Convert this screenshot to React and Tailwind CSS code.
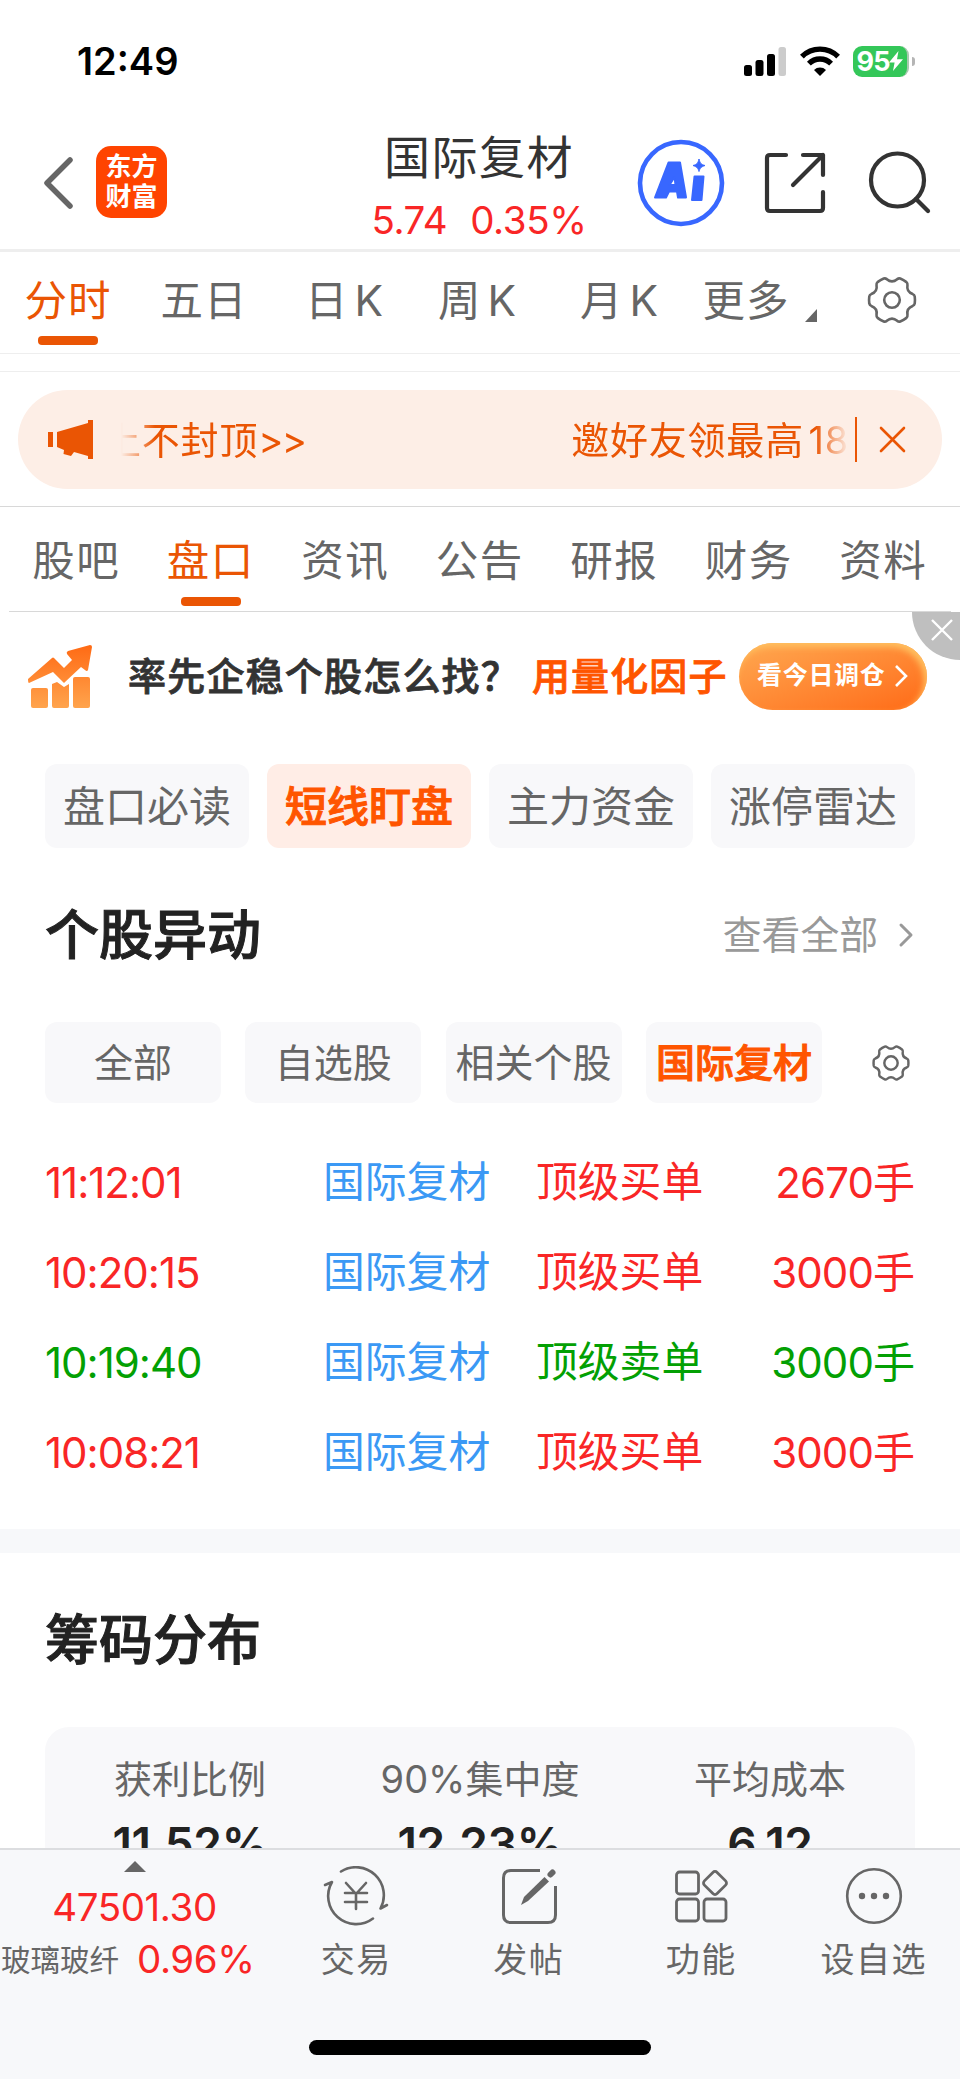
import { ChevronRight } from 'lucide-react';

const chartTabs = [
  { label: '分时', cell: 'w-[136px]', active: true },
  { label: '五日', cell: 'w-[136px]' },
  { label: '日 K', cell: 'w-[145px]' },
  { label: '周 K', cell: 'w-[121px]' },
  { label: '月 K', cell: 'w-[163px]' },
  { label: '更多', cell: 'w-[90px]' },
];

const infoTabs = ['股吧', '盘口', '资讯', '公告', '研报', '财务', '资料'];
const topics = ['盘口必读', '短线盯盘', '主力资金', '涨停雷达'];
const filters = ['全部', '自选股', '相关个股', '国际复材'];

const orders = [
  { time: '11:12:01', name: '国际复材', type: '顶级买单', amount: '2670', side: 'buy' },
  { time: '10:20:15', name: '国际复材', type: '顶级买单', amount: '3000', side: 'buy' },
  { time: '10:19:40', name: '国际复材', type: '顶级卖单', amount: '3000', side: 'sell' },
  { time: '10:08:21', name: '国际复材', type: '顶级买单', amount: '3000', side: 'buy' },
];

const chips = [
  { label: '获利比例', value: '11.52%' },
  { label: '90%集中度', value: '12.23%' },
  { label: '平均成本', value: '6.12' },
];

const polar = (r, deg) => {
  const a = (deg * Math.PI) / 180;
  return `${(r * Math.cos(a)).toFixed(2)} ${(r * Math.sin(a)).toFixed(2)}`;
};

// six wide teeth joined by round notches
const gearPath = () => {
  let d = `M${polar(21.5, -16)}`;
  for (let i = 0; i < 6; i++) {
    const a = i * 60;
    d += `Q${polar(23, a - 13)} ${polar(23, a - 9)}`;
    d += `Q${polar(23.2, a)} ${polar(23, a + 9)}`;
    d += `Q${polar(23, a + 13)} ${polar(21.5, a + 16)}`;
    d += `Q${polar(16.5, a + 30)} ${polar(21.5, a + 44)}`;
  }
  return `${d}Z`;
};

function Gear({ className, hole, stroke }) {
  return (
    <svg className={className} viewBox="-25 -25 50 50" fill="none" stroke="#666" strokeWidth={stroke}>
      <path d={gearPath()} strokeLinejoin="round" />
      <circle r={hole} />
    </svg>
  );
}

function StatusBar() {
  return (
    <div className="h-[122px] pl-[77px] pr-[45px] flex items-center justify-between">
      <span className="text-[38px] font-semibold leading-none text-black">12:49</span>
      <div className="flex items-center">
        <svg className="w-[42px] h-[30px]" viewBox="0 0 42 30">
          <rect x="0" y="19" width="8" height="11" rx="2.5" />
          <rect x="11.5" y="14" width="8" height="16" rx="2.5" />
          <rect x="23" y="8" width="8" height="22" rx="2.5" />
          <rect x="34.5" y="1" width="7.5" height="29" rx="2.5" fill="#ccc" />
        </svg>
        <svg className="w-[40px] h-[30px] ml-[14px]" viewBox="0 0 40 30" fill="none" stroke="#000" strokeWidth="5.4">
          <path d="M1.9 10.6a25.6 25.6 0 0 1 36.2 0" />
          <path d="M8.9 17.6a15.7 15.7 0 0 1 22.2 0" />
          <path d="M20 30l-6-6a8.5 8.5 0 0 1 12 0z" fill="#000" stroke="none" />
        </svg>
        <div className="ml-[13px] h-[31px] w-[56px] rounded-[9px] bg-[#34c759] border-r-2 border-[#a9c8b0] flex items-center justify-center">
          <span className="text-[27px] leading-none font-bold text-white tracking-[-1px]">95</span>
          <svg className="w-[14px] h-[20px]" viewBox="0 0 14 20" fill="#fff">
            <path d="M9.5 0L0 11.5h5.6L4 20 14 8.2H8z" />
          </svg>
        </div>
        <div className="ml-[3px] w-[3px] h-[9px] rounded-r-full bg-[#b5b5b5]" />
      </div>
    </div>
  );
}

function Header() {
  return (
    <div className="h-[127px] pl-[43px] flex">
      <svg className="w-[32px] h-[54px] mt-[34px]" viewBox="0 0 32 54" fill="none" stroke="#666" strokeWidth="5.5" strokeLinecap="round" strokeLinejoin="round">
        <path d="M27 4L4 27l23 23" />
      </svg>
      <div className="ml-[21px] mt-[24px] w-[71px] h-[72px] rounded-[15px] bg-[#ff4400] text-white text-[26px] font-bold leading-[30px] pt-[6px] text-center">
        <div>东方</div>
        <div>财富</div>
      </div>
      <div className="ml-[186px] w-[252px] text-center">
        <div className="mt-[7px] h-[56px] leading-[56px] text-[46px] tracking-[1.5px] text-[#333]">国际复材</div>
        <div className="mt-[12px] h-[46px] leading-[46px] text-[38.5px] tracking-[-0.4px] text-[#f92626] flex justify-center gap-[23px]">
          <span>5.74</span>
          <span>0.35%</span>
        </div>
      </div>
      <svg className="ml-[32px] mt-[17px] w-[88px] h-[88px]" viewBox="0 0 88 88">
        <circle cx="44" cy="44" r="41" fill="none" stroke="#3867ff" strokeWidth="4.6" />
        <g fill="#3867ff" stroke="#3867ff" strokeWidth="2" strokeLinejoin="round">
          <path fillRule="evenodd" d="M31.500 23.500H43L49 58.500H41l-1-6h-8l-3 6H18zM32.500 46h6l-1-8z" />
          <path d="M57.500 37.500h9l-2 23.500h-9.500z" />
          <path d="M62 20c1 4 2 5.500 6 6.500-4 1.500-5 2.500-6 6-1-3.500-2-4.500-6-6 4-1 5-2.500 6-6.500z" strokeWidth="1" />
        </g>
      </svg>
      <svg className="ml-[39px] mt-[30px] w-[62px] h-[62px]" viewBox="0 0 62 62" fill="none" stroke="#333" strokeWidth="4.2" strokeLinecap="round" strokeLinejoin="round">
        <path d="M22 3H6Q3 3 3 6V56Q3 59 6 59H56Q59 59 59 56V40" />
        <path d="M39 3H59V23M59 3L29 33" />
      </svg>
      <svg className="ml-[42px] mt-[28px] w-[64px] h-[64px]" viewBox="0 0 64 64" fill="none" stroke="#333" strokeWidth="4.2" strokeLinecap="round">
        <circle cx="29.500" cy="30" r="26.500" />
        <path d="M48 49l12 12" />
      </svg>
    </div>
  );
}

function ChartTabs() {
  return (
    <div className="h-[105px] border-t-[3px] border-b border-[#eee] flex">
      {chartTabs.map((tab) => (
        <div key={tab.label} className={`${tab.cell} flex flex-col items-center`}>
          <span className={`mt-[19px] h-[60px] leading-[60px] text-[42.5px] tracking-[1px] [word-spacing:-7px] whitespace-nowrap ${tab.active ? 'text-[#ea5504]' : 'text-[#666]'}`}>
            {tab.label}
          </span>
          {tab.active && <div className="mt-[5px] w-[60px] h-[9px] rounded-[4px] bg-[#ea5504]" />}
        </div>
      ))}
      <svg className="ml-[14px] mt-[57px] w-[12px] h-[13px]" viewBox="0 0 12 13" fill="#666">
        <path d="M12 0V13H0z" />
      </svg>
      <Gear className="ml-[50px] mt-[23px] w-[50px] h-[50px]" hole={7.8} stroke={2.6} />
    </div>
  );
}

function Notice() {
  return (
    <div className="mt-[17px] border-t border-[#eee] h-[135px] px-[18px] pt-[18px]">
      <div className="h-[99px] rounded-[50px] bg-[#fdeee6] flex items-center text-[#ea5504]">
        <svg className="ml-[30px] w-[45px] h-[39px]" viewBox="0 0 45 39" fill="#ea5504">
          <path d="M0 12h5v15H0zM9 12L40 3V0h5v39h-5v-3l-14-4-3 4-7.500-2 .5-4-7-3z" />
        </svg>
        <div className="ml-[28px] w-[728px] h-[56px] leading-[56px] text-[38px] overflow-hidden flex whitespace-nowrap [mask-image:linear-gradient(to_right,transparent,black_34px,black_694px,transparent)]">
          <span className="ml-[-18px] tracking-[0.8px]">
            上不封顶<span className="tracking-[-1.5px]">&gt;&gt;</span>
          </span>
          <span className="ml-auto tracking-[0.8px] [word-spacing:-7px]">邀好友领最高 18</span>
        </div>
        <div className="ml-[6px] w-[2px] h-[45px] bg-[#ea5504]" />
        <svg className="ml-[22px] w-[27px] h-[27px]" viewBox="0 0 27 27" stroke="#ea5504" strokeWidth="2.600" strokeLinecap="round">
          <path d="M2 2l23 23M25 2L2 25" />
        </svg>
      </div>
    </div>
  );
}

function InfoTabs() {
  return (
    <div className="border-t border-[#d8d8d8] px-[9px]">
      <div className="h-[105px] border-b border-[#d8d8d8] flex">
        {infoTabs.map((label, i) => (
          <div key={label} className="w-[134.500px] flex flex-col items-center">
            <span className={`mt-[24px] h-[60px] leading-[60px] text-[42.500px] tracking-[1.500px] whitespace-nowrap ${i === 1 ? 'text-[#ea5504]' : 'text-[#666]'}`}>
              {label}
            </span>
            {i === 1 && <div className="mt-[6px] w-[60px] h-[9px] rounded-[4px] bg-[#ea5504]" />}
          </div>
        ))}
      </div>
    </div>
  );
}

function AdBanner() {
  return (
    <div className="relative h-[128px] pl-[28px] pr-[33px] flex items-center">
      <svg className="w-[65px] h-[63px]" viewBox="0 0 65 63">
        <defs>
          <linearGradient id="ad" x1="0" y1="0" x2="0" y2="63" gradientUnits="userSpaceOnUse">
            <stop offset="0" stopColor="#ff6a14" />
            <stop offset="1" stopColor="#ffa44d" />
          </linearGradient>
        </defs>
        <g fill="url(#ad)">
          <path d="M0 34L24 13Q25 12 26 13L36 23L44 15L39 9Q38 7 40 6L62 0Q64 0 64 2L60 25Q59 27 57 25L53 22L36 38L25 27L1 38Q0 38 0 34z" />
          <rect x="3" y="43" width="17" height="20" rx="2" />
          <path d="M24 39l5-2 7 5 5-3v22q0 2-2 2H26q-2 0-2-2z" />
          <rect x="45" y="32" width="17" height="31" rx="2" />
        </g>
      </svg>
      <span className="ml-[35px] w-[404px] text-[38px] tracking-[1.200px] font-medium [-webkit-text-stroke:0.8px] whitespace-nowrap text-[#333]">率先企稳个股怎么找？</span>
      <span className="text-[38px] tracking-[1.100px] font-medium [-webkit-text-stroke:0.8px] whitespace-nowrap text-[#ff5500]">用量化因子</span>
      <div className="ml-auto w-[188px] h-[67px] rounded-full bg-linear-to-br from-[#ffa850] via-[#ff8a35] to-[#ff6a14] shadow-[inset_-3px_4px_6px_#ffc060] flex items-center pl-[18px] text-white">
        <span className="text-[25px] tracking-[0.700px] font-bold whitespace-nowrap">看今日调仓</span>
        <svg className="ml-[8px] w-[14px] h-[22px]" viewBox="0 0 14 22" fill="none" stroke="#fff" strokeWidth="2.600">
          <path d="M2 1l10 10L2 21" />
        </svg>
      </div>
      <div className="absolute top-0 right-0 w-[48px] h-[48px] rounded-bl-full bg-[#bfbfbf] pl-[19px] pt-[7px]">
        <svg className="w-[22px] h-[22px]" viewBox="0 0 22 22" stroke="#fff" strokeWidth="2.400">
          <path d="M1 1l20 20M21 1L1 21" />
        </svg>
      </div>
    </div>
  );
}

function Topics() {
  return (
    <div className="mt-[24px] mx-[45px] flex gap-[18px]">
      {topics.map((label, i) => (
        <div
          key={label}
          className={`w-[204px] h-[84px] leading-[86px] rounded-[12px] text-center text-[42px] whitespace-nowrap ${i === 1 ? 'bg-[#ffede6] text-[#ff5500] font-medium [-webkit-text-stroke:1px]' : 'bg-[#f8f8fa] text-[#666]'}`}
        >
          {label}
        </div>
      ))}
    </div>
  );
}

function StockMoves() {
  return (
    <div className="mx-[45px]">
      <div className="mt-[47px] h-[80px] flex items-center">
        <h2 className="text-[54px] leading-[80px] pt-[2px] font-medium [-webkit-text-stroke:1px] text-[#222]">个股异动</h2>
        <span className="ml-auto text-[38.800px] text-[#999]">查看全部</span>
        <ChevronRight className="ml-[8px] mr-[-11px] w-[40px] h-[46px] text-[#999]" strokeWidth={1.8} />
      </div>

      <div className="mt-[47px] flex items-center">
        <div className="flex gap-[24.300px]">
          {filters.map((label, i) => (
            <div
              key={label}
              className={`w-[176px] h-[81px] leading-[81px] rounded-[12px] bg-[#f8f8fa] text-center text-[39px] whitespace-nowrap ${i === 3 ? 'text-[#ff5500] font-medium [-webkit-text-stroke:1px]' : 'text-[#666]'}`}
            >
              {label}
            </div>
          ))}
        </div>
        <Gear className="ml-[50px] w-[38px] h-[38px]" hole={8.8} stroke={3.2} />
      </div>

      <div className="mt-[34px]">
        {orders.map((order) => (
          <div
            key={order.time}
            className={`h-[90px] flex items-center text-[42px] whitespace-nowrap ${order.side === 'buy' ? 'text-[#f92626]' : 'text-[#03a003]'}`}
          >
            <span className="w-[278px] tracking-[-1px]">{order.time}</span>
            <span className="w-[213px] text-[41.800px] text-[#3b99f5]">{order.name}</span>
            <span className="text-[41.800px]">{order.type}</span>
            <span className="ml-auto"><span className="tracking-[-0.900px]">{order.amount}</span>手</span>
          </div>
        ))}
      </div>
    </div>
  );
}

function ChipSpread() {
  return (
    <div className="mt-[32px] border-t-[24px] border-[#f7f8fa] px-[45px] flex-1 overflow-hidden">
      <h2 className="mt-[48px] text-[54px] leading-[80px] font-medium [-webkit-text-stroke:1px] text-[#222]">筹码分布</h2>
      <div className="mt-[46px] h-[240px] rounded-[24px] bg-[#f8f8fa] pt-[24px] flex">
        {chips.map((chip) => (
          <div key={chip.label} className="w-[290px] text-center whitespace-nowrap">
            <div className="h-[56px] leading-[56px] text-[38px] text-[#666]">{chip.label}</div>
            <div className="mt-[7px] h-[60px] leading-[60px] text-[46px] font-semibold tracking-[-0.300px] text-[#222]">{chip.value}</div>
          </div>
        ))}
      </div>
    </div>
  );
}

function TradeIcon() {
  return (
    <svg className="w-[66px] h-[60px]" viewBox="0 0 66 60" fill="none" stroke="#666" strokeWidth="2.600" strokeLinecap="round" strokeLinejoin="round">
      <path d="M18 5.500A28 28 0 0 1 57.500 42.500L64 39" />
      <path d="M50 52.500A28 28 0 0 1 9 16L2 19" />
      <path d="M23 17l10 11 10-11M22 27h22M22 36h22M33 28v15" />
    </svg>
  );
}

function PostIcon() {
  return (
    <svg className="w-[60px] h-[60px]" viewBox="0 0 60 60" fill="none" stroke="#666" strokeWidth="3">
      <path d="M41 4.500H12Q4.500 4.500 4.500 12V49Q4.500 56.500 12 56.500H49Q56.500 56.500 56.500 49V20" />
      <path d="M51.500 8.500L53.500 6.500" strokeWidth="6" strokeLinecap="round" />
      <path d="M45.500 11L50 15.500L29 35L22 39L25 31z" fill="#666" stroke="none" />
    </svg>
  );
}

function ToolsIcon() {
  return (
    <svg className="w-[56px] h-[56px]" viewBox="0 0 56 56" fill="none" stroke="#666" strokeWidth="2.800">
      <rect x="3.500" y="4" width="22" height="22" rx="3" />
      <rect x="3.500" y="31" width="22" height="22" rx="3" />
      <rect x="31" y="31" width="22" height="22" rx="3" />
      <rect x="33" y="6" width="18" height="18" rx="3" transform="rotate(45 42 15)" />
    </svg>
  );
}

function MoreIcon() {
  return (
    <svg className="w-[60px] h-[60px]" viewBox="0 0 60 60">
      <circle cx="30" cy="30" r="26.800" fill="none" stroke="#666" strokeWidth="2.600" />
      <g fill="#666">
        <circle cx="18" cy="30" r="3.200" />
        <circle cx="30" cy="30" r="3.200" />
        <circle cx="42" cy="30" r="3.200" />
      </g>
    </svg>
  );
}

const actions = [
  { label: '交易', icon: <TradeIcon /> },
  { label: '发帖', icon: <PostIcon /> },
  { label: '功能', icon: <ToolsIcon /> },
  { label: '设自选', icon: <MoreIcon /> },
];

function BottomBar() {
  return (
    <div className="h-[231px] border-t-2 border-[#dcdde0] bg-[#f7f8fa] flex flex-col">
      <div className="flex h-[190px]">
        <div className="w-[270px] flex flex-col">
          <svg className="ml-[124px] mt-[11px] w-[22px] h-[11px]" viewBox="0 0 22 11" fill="#666">
            <path d="M11 0l11 11H0z" />
          </svg>
          <div className="h-[60px] mt-[5px] leading-[60px] w-[269px] text-center text-[38.500px] tracking-[-0.400px] text-[#f92626]">47501.30</div>
          <div className="mt-[-7px] pl-[1px] h-[60px] flex items-center whitespace-nowrap">
            <span className="w-[136px] text-[29.500px] text-[#666]">玻璃玻纤</span>
            <span className="text-[38.500px] tracking-[-0.400px] text-[#f92626]">0.96%</span>
          </div>
        </div>
        {actions.map((action) => (
          <div key={action.label} className="w-[172.500px] flex flex-col items-center">
            <div className="mt-[16px] h-[60px] flex items-center">{action.icon}</div>
            <div className="mt-[8px] h-[52px] leading-[52px] text-[34px] tracking-[1.500px] text-[#666] whitespace-nowrap">{action.label}</div>
          </div>
        ))}
      </div>
      <div className="w-[342px] h-[15px] mx-auto rounded-full bg-black" />
    </div>
  );
}

export default function App() {
  return (
    <div className="w-[960px] h-[2079px] overflow-hidden bg-white flex flex-col font-['Inter','Noto_Sans_CJK_SC',sans-serif]">
      <StatusBar />
      <Header />
      <ChartTabs />
      <Notice />
      <InfoTabs />
      <AdBanner />
      <Topics />
      <StockMoves />
      <ChipSpread />
      <BottomBar />
    </div>
  );
}
